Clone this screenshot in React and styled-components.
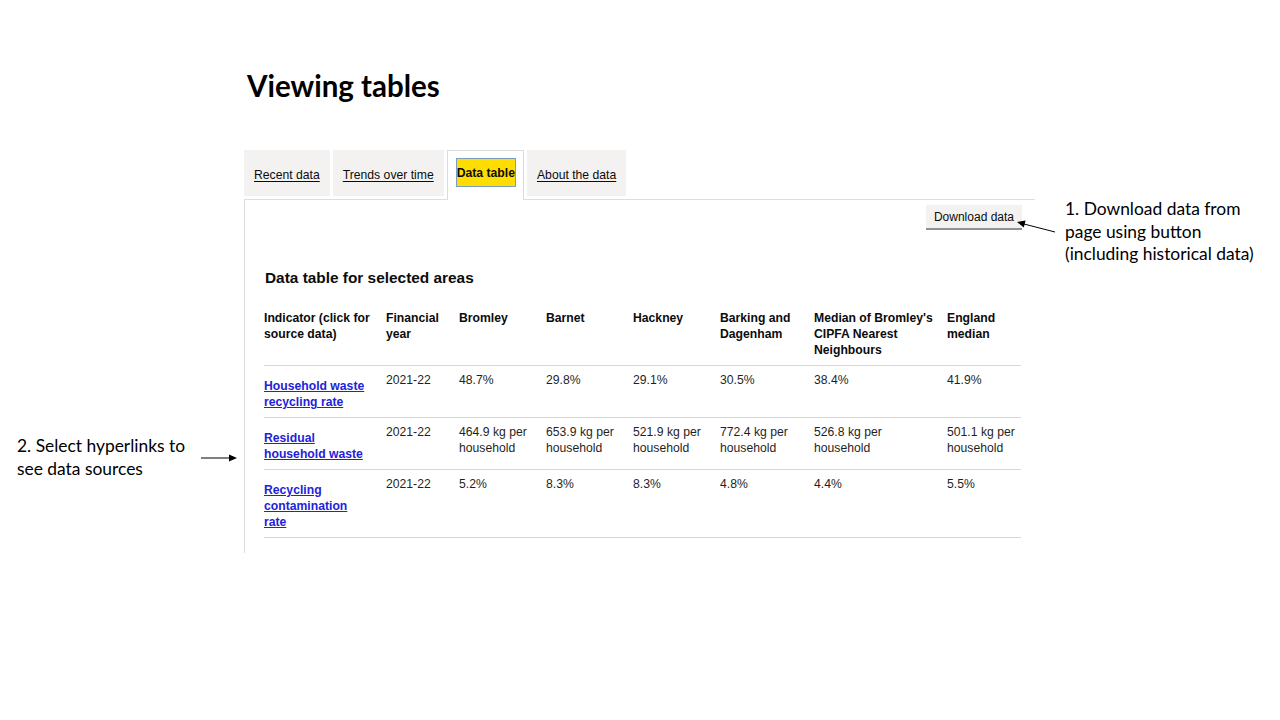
import React from 'react';
import styled, {createGlobalStyle} from 'styled-components';

const GlobalStyle = createGlobalStyle`
    html, body {
        margin: 0;
        padding: 0;
        background: #ffffff;
    }
`;

const Slide = styled.div`
    position: relative;
    width: 1280px;
    height: 720px;
    box-sizing: border-box;
    padding: 69px 0 0 244px;
    overflow: hidden;
    background: #ffffff;
    font-family: "Liberation Sans", Arial, sans-serif;
    color: #0b0c0c;
`;

const Title = styled.h1`
    margin: 0;
    padding-left: 3px;
    font-family: Lato, "Open Sans", sans-serif;
    font-weight: 700;
    font-size: 29.5px;
    line-height: 34px;
    color: #000000;
`;

const TabList = styled.div`
    display: flex;
    align-items: flex-start;
    gap: 3px;
    height: 49px;
    margin-top: 47px;
`;

const Tab = styled.div`
    box-sizing: border-box;
    height: 46px;
    padding: 17px 10px 13px;
    background: #f3f2f1;
    font-size: 12.2px;
    line-height: 16px;
    white-space: nowrap;
`;

const TabLink = styled.span`
    text-decoration: underline;
    text-underline-offset: 2px;
    text-decoration-thickness: 1px;
`;

const ActiveTab = styled.div`
    position: relative;
    z-index: 1;
    box-sizing: border-box;
    height: 50px;
    padding: 7px 7px 0 8px;
    background: #ffffff;
    border: 1px solid #dcdcdc;
    border-bottom: none;
    font-size: 12.2px;
    line-height: 16px;
    white-space: nowrap;
`;

const Focus = styled.span`
    display: inline-block;
    padding: 6px 0 5px;
    background: #ffdd00;
    border: 1px solid #7b9dbf;
    font-weight: 700;
`;

const Panel = styled.div`
    box-sizing: border-box;
    width: 791px;
    padding: 5px 14px 15px 19px;
    border-top: 1px solid #dedede;
    border-left: 1px solid #dedede;
`;

const ButtonRow = styled.div`
    display: flex;
    justify-content: flex-end;
    margin-right: -1px;
`;

const Button = styled.button`
    margin: 0 0 2px;
    padding: 4px 8px 3px;
    border: none;
    border-radius: 0;
    background: #f3f2f1;
    box-shadow: 0 2px 0 #929191;
    font-family: "Liberation Sans", Arial, sans-serif;
    font-size: 12px;
    line-height: 16px;
    color: #0b0c0c;
`;

const Heading = styled.h2`
    margin: 38px 0 0 1px;
    font-size: 15.4px;
    line-height: 20px;
    font-weight: 700;
`;

const Table = styled.table`
    width: 757px;
    margin-top: 22px;
    border-collapse: collapse;
    table-layout: fixed;
    font-size: 12.2px;
    line-height: 16px;
`;

const Th = styled.th`
    padding: 0 ${p => p.$pr}px 7px 0;
    text-align: left;
    vertical-align: top;
    font-weight: 700;
    border-bottom: 1px solid #d6d6d6;
`;

const RowHead = styled.th`
    padding: 12px 14.5px 7px 0;
    text-align: left;
    vertical-align: top;
    font-weight: 700;
    border-bottom: 1px solid #d6d6d6;
`;

const Td = styled.td`
    padding: 6px ${p => p.$pr}px 7px 0;
    vertical-align: top;
    border-bottom: 1px solid #d6d6d6;
    color: #1f1f1f;
`;

const Link = styled.a`
    color: #2222d8;
    text-decoration: underline;
    text-underline-offset: 1px;
`;

const Note = styled.div`
    position: absolute;
    left: ${p => p.$x}px;
    top: ${p => p.$y}px;
    font-family: Lato, "Open Sans", sans-serif;
    font-size: 17.4px;
    line-height: 22.5px;
    color: #000000;
    white-space: nowrap;
`;

const Arrows = styled.svg`
    position: absolute;
    left: 0;
    top: 0;
    pointer-events: none;
`;

const widths = [122, 73, 87, 87, 87, 94, 133, 74];
const heads = [
    'Indicator (click for source data)',
    'Financial year',
    'Bromley',
    'Barnet',
    'Hackney',
    'Barking and Dagenham',
    "Median of Bromley's CIPFA Nearest Neighbours",
    'England median',
];

const rows = [
    {name: 'Household waste recycling rate', values: ['48.7%', '29.8%', '29.1%', '30.5%', '38.4%', '41.9%']},
    {name: 'Residual household waste', values: ['464.9 kg per household', '653.9 kg per household', '521.9 kg per household', '772.4 kg per household', '526.8 kg per household', '501.1 kg per household']},
    {name: 'Recycling contamination rate', values: ['5.2%', '8.3%', '8.3%', '4.8%', '4.4%', '5.5%']},
];

const padFor = i => (i === 0 ? 14.5 : i === widths.length - 1 ? 0 : 12);

const App = () => {
    return <>
        <GlobalStyle />
        <Slide>
            <Title>Viewing tables</Title>
            <TabList>
                <Tab><TabLink>Recent data</TabLink></Tab>
                <Tab><TabLink>Trends over time</TabLink></Tab>
                <ActiveTab><Focus>Data table</Focus></ActiveTab>
                <Tab><TabLink>About the data</TabLink></Tab>
            </TabList>
            <Panel>
                <ButtonRow>
                    <Button>Download data</Button>
                </ButtonRow>
                <Heading>Data table for selected areas</Heading>
                <Table>
                    <colgroup>
                        {widths.map((w, i) => <col key={i} style={{width: w}} />)}
                    </colgroup>
                    <thead>
                        <tr>
                            {heads.map((h, i) => <Th key={h} $pr={padFor(i)}>{h}</Th>)}
                        </tr>
                    </thead>
                    <tbody>
                        {rows.map(row => (
                            <tr key={row.name}>
                                <RowHead><Link href="#">{row.name}</Link></RowHead>
                                <Td $pr={12}>2021-22</Td>
                                {row.values.map((v, i) => (
                                    <Td key={i} $pr={padFor(i + 2)}>{v}</Td>
                                ))}
                            </tr>
                        ))}
                    </tbody>
                </Table>
            </Panel>

            <Note $x={1065} $y={198}>
                1. Download data from<br />
                page using button<br />
                (including historical data)
            </Note>
            <Note $x={17} $y={435}>
                2. Select hyperlinks to<br />
                see data sources
            </Note>

            <Arrows width="1280" height="720" viewBox="0 0 1280 720">
                <line x1="1055" y1="232" x2="1024" y2="224" stroke="#000" strokeWidth="1" />
                <polygon points="1017,222 1025.6,220.4 1023.8,227.6" fill="#000" />
                <line x1="201" y1="458" x2="230" y2="458" stroke="#000" strokeWidth="1" />
                <polygon points="237,458 229,454.5 229,461.5" fill="#000" />
            </Arrows>
        </Slide>
    </>
}

export default App;
